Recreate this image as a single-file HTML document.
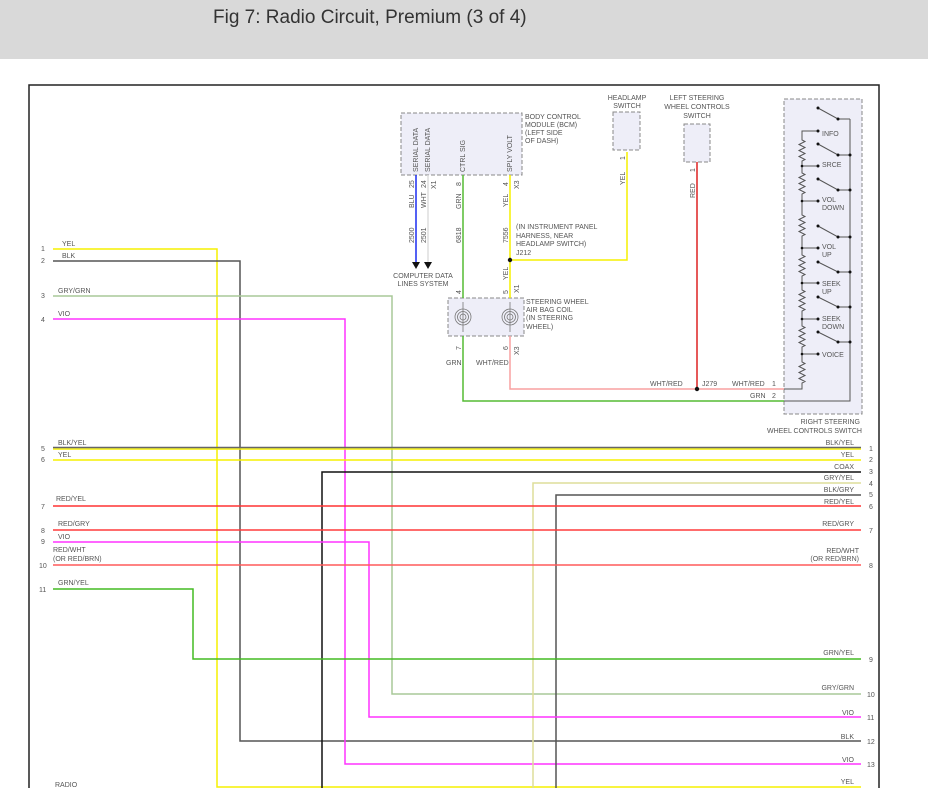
<!DOCTYPE html>
<html><head><meta charset="utf-8"><style>
body{margin:0;width:928px;height:800px;overflow:hidden;background:#fff;font-family:"Liberation Sans",sans-serif}
.bar{position:absolute;left:0;top:0;width:928px;height:59px;background:#d9d9d9}
.bar span{position:absolute;left:213px;top:7px;font-size:19px;color:#333}
svg{position:absolute;left:0;top:0}
text{font-family:"Liberation Sans",sans-serif;font-size:7px;fill:#555}
</style></head><body>
<div class="bar"><span>Fig 7: Radio Circuit, Premium (3 of 4)</span></div>
<svg width="928" height="800" viewBox="0 0 928 800">
<rect x="29" y="85" width="850" height="720" fill="none" stroke="#222" stroke-width="1.5"/>
<g fill="#eeeef8" stroke="#888" stroke-dasharray="4,2" stroke-width="1">
<rect x="401" y="113" width="121" height="62"/>
<rect x="613" y="112" width="27" height="38"/>
<rect x="684" y="124" width="26" height="38"/>
<rect x="448" y="298" width="76" height="38"/>
<rect x="784" y="99" width="78" height="315"/>
</g>
<g fill="none" stroke-width="1.5">
<path d="M53,249H217V787H861" stroke="#f5f000"/>
<path d="M53,261H240V741H861" stroke="#555"/>
<path d="M53,296H392V694H861" stroke="#a8c898"/>
<path d="M53,319H345V764H861" stroke="#ff33ff"/>
<path d="M53,449H861" stroke="#f5f000"/>
<path d="M53,447.5H861" stroke="#666"/>
<path d="M53,460H861" stroke="#f5f000"/>
<path d="M322,800V472H861" stroke="#111"/>
<path d="M533,800V483H861" stroke="#dede9a"/>
<path d="M556,800V495H861" stroke="#555"/>
<path d="M53,506H861" stroke="#ff3333"/>
<path d="M53,530H861" stroke="#ff3c3c"/>
<path d="M53,542H369V717H861" stroke="#ff33ff"/>
<path d="M53,565H861" stroke="#ff5a5a"/>
<path d="M53,589H193V659H861" stroke="#44bb22"/>
<path d="M416,175V262" stroke="#1a2cf0"/>
<path d="M428,175V262" stroke="#ddd"/>
<path d="M463,175V298M463,336V401H784" stroke="#55bb33"/>
<path d="M510,175V298M627,152V260H510" stroke="#f5f000"/>
<path d="M510,336V389H784" stroke="#f8a0a0"/>
<path d="M697,162V389" stroke="#dd2222"/>
</g>
<path d="M412,262h8l-4,7zM424,262h8l-4,7z" fill="#111"/>
<circle cx="510" cy="260" r="2.2" fill="#111"/>
<circle cx="697" cy="389" r="2.2" fill="#111"/>
<g fill="none" stroke="#777" stroke-width="0.8">
<circle cx="463" cy="317" r="8"/><circle cx="463" cy="317" r="5.5"/><circle cx="463" cy="317" r="3"/>
<circle cx="510" cy="317" r="8"/><circle cx="510" cy="317" r="5.5"/><circle cx="510" cy="317" r="3"/>
<path d="M463,302V332M510,302V332"/>
</g>
<g fill="none" stroke="#555" stroke-width="1">
<path d="M850,119V401H784"/>
<path d="M818,131H802V140l3,1.5l-6,3l6,3l-6,3l6,3l-6,3l6,3l-3,1.5V166"/>
<path d="M802,166V173l3,1.5l-6,3l6,3l-6,3l6,3l-6,3l6,3l-3,1.5V201"/>
<path d="M802,201V215l3,1.5l-6,3l6,3l-6,3l6,3l-6,3l6,3l-3,1.5V248"/>
<path d="M802,248V255l3,1.5l-6,3l6,3l-6,3l6,3l-6,3l6,3l-3,1.5V283"/>
<path d="M802,283V290l3,1.5l-6,3l6,3l-6,3l6,3l-6,3l6,3l-3,1.5V319"/>
<path d="M802,319V326l3,1.5l-6,3l6,3l-6,3l6,3l-6,3l6,3l-3,1.5V354"/>
<path d="M802,354V362l3,1.5l-6,3l6,3l-6,3l6,3l-6,3l6,3l-3,1.5V389H784"/>
<path d="M802,166H818M802,201H818M802,248H818M802,283H818M802,319H818M802,354H818"/>
<path d="M818,108L838,119H850M818,144L838,155H850M818,179L838,190H850M818,226L838,237H850M818,262L838,272H850M818,297L838,307H850M818,332L838,342H850"/>
</g>
<g fill="#111">
<circle cx="818" cy="108" r="1.5"/><circle cx="838" cy="119" r="1.5"/>
<circle cx="818" cy="144" r="1.5"/><circle cx="838" cy="155" r="1.5"/><circle cx="850" cy="155" r="1.5"/>
<circle cx="818" cy="179" r="1.5"/><circle cx="838" cy="190" r="1.5"/><circle cx="850" cy="190" r="1.5"/>
<circle cx="818" cy="226" r="1.5"/><circle cx="838" cy="237" r="1.5"/><circle cx="850" cy="237" r="1.5"/>
<circle cx="818" cy="262" r="1.5"/><circle cx="838" cy="272" r="1.5"/><circle cx="850" cy="272" r="1.5"/>
<circle cx="818" cy="297" r="1.5"/><circle cx="838" cy="307" r="1.5"/><circle cx="850" cy="307" r="1.5"/>
<circle cx="818" cy="332" r="1.5"/><circle cx="838" cy="342" r="1.5"/><circle cx="850" cy="342" r="1.5"/>
<circle cx="818" cy="131" r="1.5"/><circle cx="818" cy="166" r="1.5"/><circle cx="818" cy="201" r="1.5"/><circle cx="818" cy="248" r="1.5"/><circle cx="818" cy="283" r="1.5"/><circle cx="818" cy="319" r="1.5"/><circle cx="818" cy="354" r="1.5"/>
<circle cx="802" cy="166" r="1.3"/><circle cx="802" cy="201" r="1.3"/><circle cx="802" cy="248" r="1.3"/><circle cx="802" cy="283" r="1.3"/><circle cx="802" cy="319" r="1.3"/><circle cx="802" cy="354" r="1.3"/>
</g>
<g>
<text x="822" y="136">INFO</text><text x="822" y="167">SRCE</text>
<text x="822" y="202">VOL</text><text x="822" y="210">DOWN</text>
<text x="822" y="249">VOL</text><text x="822" y="257">UP</text>
<text x="822" y="286">SEEK</text><text x="822" y="294">UP</text>
<text x="822" y="321">SEEK</text><text x="822" y="329">DOWN</text>
<text x="822" y="357">VOICE</text>
<text x="860" y="424" text-anchor="end">RIGHT STEERING</text>
<text x="862" y="433" text-anchor="end">WHEEL CONTROLS SWITCH</text>
<text x="525" y="119">BODY CONTROL</text><text x="525" y="127">MODULE (BCM)</text><text x="525" y="135">(LEFT SIDE</text><text x="525" y="143">OF DASH)</text>
<text x="627" y="100" text-anchor="middle">HEADLAMP</text><text x="627" y="108" text-anchor="middle">SWITCH</text>
<text x="697" y="100" text-anchor="middle">LEFT STEERING</text><text x="697" y="109" text-anchor="middle">WHEEL CONTROLS</text><text x="697" y="118" text-anchor="middle">SWITCH</text>
<text x="516" y="229">(IN INSTRUMENT PANEL</text><text x="516" y="238">HARNESS, NEAR</text><text x="516" y="246">HEADLAMP SWITCH)</text><text x="516" y="255">J212</text>
<text x="423" y="278" text-anchor="middle">COMPUTER DATA</text><text x="423" y="286" text-anchor="middle">LINES SYSTEM</text>
<text x="526" y="304">STEERING WHEEL</text><text x="526" y="312">AIR BAG COIL</text><text x="526" y="320">(IN STEERING</text><text x="526" y="329">WHEEL)</text>
<text x="446" y="365">GRN</text><text x="476" y="365">WHT/RED</text>
<text x="650" y="386">WHT/RED</text><text x="702" y="386">J279</text><text x="732" y="386">WHT/RED</text><text x="772" y="386">1</text>
<text x="750" y="398">GRN</text><text x="772" y="398">2</text>
</g>
<g>
<text transform="translate(418,172) rotate(-90)">SERIAL DATA</text>
<text transform="translate(430,172) rotate(-90)">SERIAL DATA</text>
<text transform="translate(465,172) rotate(-90)">CTRL SIG</text>
<text transform="translate(512,172) rotate(-90)">SPLY VOLT</text>
<text transform="translate(414,188) rotate(-90)">25</text><text transform="translate(426,188) rotate(-90)">24</text><text transform="translate(436,189) rotate(-90)">X1</text>
<text transform="translate(461,186) rotate(-90)">8</text><text transform="translate(508,186) rotate(-90)">4</text><text transform="translate(519,189) rotate(-90)">X3</text>
<text transform="translate(414,208) rotate(-90)">BLU</text><text transform="translate(426,208) rotate(-90)">WHT</text>
<text transform="translate(461,209) rotate(-90)">GRN</text><text transform="translate(508,207) rotate(-90)">YEL</text>
<text transform="translate(414,243) rotate(-90)">2500</text><text transform="translate(426,243) rotate(-90)">2501</text>
<text transform="translate(461,243) rotate(-90)">6818</text><text transform="translate(508,243) rotate(-90)">7556</text>
<text transform="translate(508,280) rotate(-90)">YEL</text>
<text transform="translate(461,294) rotate(-90)">4</text><text transform="translate(508,294) rotate(-90)">5</text><text transform="translate(519,293) rotate(-90)">X1</text>
<text transform="translate(461,350) rotate(-90)">7</text><text transform="translate(508,350) rotate(-90)">6</text><text transform="translate(519,355) rotate(-90)">X3</text>
<text transform="translate(625,160) rotate(-90)">1</text><text transform="translate(625,185) rotate(-90)">YEL</text>
<text transform="translate(695,172) rotate(-90)">1</text><text transform="translate(695,198) rotate(-90)">RED</text>
</g>
<g>
<text x="41" y="251">1</text><text x="62" y="246">YEL</text>
<text x="41" y="263">2</text><text x="62" y="258">BLK</text>
<text x="41" y="298">3</text><text x="58" y="293">GRY/GRN</text>
<text x="41" y="322">4</text><text x="58" y="316">VIO</text>
<text x="41" y="451">5</text><text x="58" y="445">BLK/YEL</text>
<text x="41" y="462">6</text><text x="58" y="457">YEL</text>
<text x="41" y="509">7</text><text x="56" y="501">RED/YEL</text>
<text x="41" y="533">8</text><text x="58" y="526">RED/GRY</text>
<text x="41" y="544">9</text><text x="58" y="539">VIO</text>
<text x="53" y="552">RED/WHT</text><text x="53" y="561">(OR RED/BRN)</text>
<text x="39" y="568">10</text>
<text x="39" y="592">11</text><text x="58" y="585">GRN/YEL</text>
<text x="55" y="787">RADIO</text>
</g>
<g text-anchor="end">
<text x="854" y="445">BLK/YEL</text><text x="854" y="457">YEL</text><text x="854" y="469">COAX</text>
<text x="854" y="480">GRY/YEL</text><text x="854" y="492">BLK/GRY</text><text x="854" y="504">RED/YEL</text>
<text x="854" y="526">RED/GRY</text><text x="859" y="553">RED/WHT</text><text x="859" y="561">(OR RED/BRN)</text>
<text x="854" y="655">GRN/YEL</text><text x="854" y="690">GRY/GRN</text><text x="854" y="715">VIO</text>
<text x="854" y="739">BLK</text><text x="854" y="762">VIO</text><text x="854" y="784">YEL</text>
</g>
<g>
<text x="869" y="451">1</text><text x="869" y="462">2</text><text x="869" y="474">3</text><text x="869" y="486">4</text>
<text x="869" y="497">5</text><text x="869" y="509">6</text><text x="869" y="533">7</text><text x="869" y="568">8</text>
<text x="869" y="662">9</text><text x="867" y="697">10</text><text x="867" y="720">11</text><text x="867" y="744">12</text>
<text x="867" y="767">13</text>
</g>
<rect x="0" y="788" width="928" height="12" fill="#fff"/>
</svg>
</body></html>
